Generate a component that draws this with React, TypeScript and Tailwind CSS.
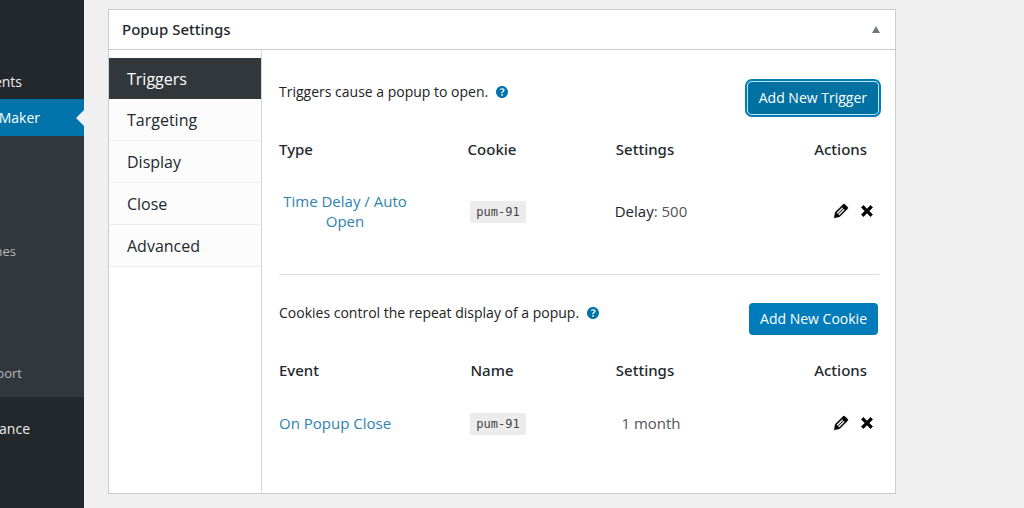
import type { ReactNode } from 'react';

const FONT = "font-['Open_Sans','Noto_Sans',sans-serif]";

function HelpIcon() {
  return (
    <svg viewBox="3 3 14 14" className="size-3 fill-[#0073aa]" aria-hidden="true">
      <path d="M17 10c0-3.87-3.14-7-7-7-3.87 0-7 3.13-7 7s3.13 7 7 7c3.86 0 7-3.13 7-7zm-6.3 1.48H9.14v-.43c0-.38.08-.7.24-.98s.46-.57.88-.89c.41-.29.68-.53.81-.71.14-.18.2-.39.2-.62 0-.25-.09-.44-.28-.58-.19-.13-.45-.19-.79-.19-.58 0-1.25.19-2 .57l-.64-1.28c.87-.49 1.8-.74 2.77-.74.81 0 1.45.2 1.92.58.48.39.71.91.71 1.55 0 .43-.09.8-.29 1.11-.19.32-.57.67-1.11 1.06-.38.28-.61.49-.71.63-.1.15-.15.34-.15.57v.35zm-1.47 2.74c-.18-.17-.27-.42-.27-.73 0-.33.08-.58.26-.75s.43-.25.77-.25c.32 0 .57.09.75.26s.27.42.27.74c0 .3-.09.55-.27.72-.18.18-.43.27-.75.27-.33 0-.58-.09-.76-.26z" />
    </svg>
  );
}

function EditIcon() {
  return (
    <svg viewBox="0 0 20 20" className="size-5" fill="#000" stroke="#000" strokeWidth="0.3" aria-hidden="true">
      <path d="M13.89 3.39l2.71 2.72c.46.46.42 1.24.03 1.64l-8.01 8.02-5.56 1.16 1.16-5.58s7.6-7.63 7.99-8.03c.39-.39 1.22-.39 1.68.07zm-2.73 2.79l-5.59 5.61 1.11 1.11 5.54-5.65zm-2.97 8.23l5.58-5.6-1.07-1.08-5.59 5.6z" />
    </svg>
  );
}

function RemoveIcon() {
  return (
    <svg viewBox="0 0 20 20" className="size-5" fill="#000" stroke="#000" strokeWidth="0.5" aria-hidden="true">
      <path d="M12.12 10l3.53 3.53-2.12 2.12L10 12.12l-3.54 3.54-2.12-2.12L7.88 10 4.34 6.46l2.12-2.12L10 7.88l3.54-3.53 2.12 2.12z" />
    </svg>
  );
}

function SectionHead({ text, button, focused }: { text: string; button: string; focused?: boolean }) {
  return (
    <div className="flex items-start justify-between pr-px">
      <p className="flex items-center gap-2 text-sm leading-5 text-[#222]">
        {text}
        <button type="button" aria-label="Help">
          <HelpIcon />
        </button>
      </p>
      <button
        type="button"
        className={
          focused
            ? 'h-8 rounded-sm bg-[#0071a1] px-[11px] text-sm text-white outline-2 outline-[#007cba] ring-1 ring-[#bfe3f5] outline-offset-1'
            : 'h-8 rounded-sm bg-[#007cba] px-[11px] text-sm text-white'
        }
      >
        {button}
      </button>
    </div>
  );
}

function SettingsTable({
  heads,
  label,
  value,
  children,
  tall,
}: {
  heads: string[];
  label: string;
  value: string;
  children: ReactNode;
  tall?: boolean;
}) {
  return (
    <table className="mt-5 w-full table-fixed text-[15px]">
      <colgroup>
        <col className="w-[22%]" />
        <col className="w-[29%]" />
        <col className="w-[22%]" />
        <col className="w-[27%]" />
      </colgroup>
      <thead>
        <tr className="h-[30px] font-['Noto_Sans',sans-serif] text-[#23282d]">
          <th className="p-0 text-left font-medium">{heads[0]}</th>
          <th className="p-0 pr-3 text-center font-medium">{heads[1]}</th>
          <th className="p-0 pr-3 text-center font-medium">{heads[2]}</th>
          <th className="p-0 pr-3 text-right font-medium">{heads[3]}</th>
        </tr>
      </thead>
      <tbody>
        <tr className={tall ? 'h-[94px] text-[#555]' : 'h-[76px] text-[#555]'}>
          <td className={tall ? 'p-0 text-center leading-5' : 'p-0 text-left leading-5'}>
            <a href="#edit" className="text-[#2e82ae]">
              {label}
            </a>
          </td>
          <td className="p-0 text-center">
            <code className="inline-block bg-[#ececec] px-1.5 font-['DejaVu_Sans_Mono',monospace] text-[12px] leading-[22px] text-[#444]">
              {value}
            </code>
          </td>
          <td className="p-0 text-center">{children}</td>
          <td className="p-0 pr-0.5">
            <div className="flex justify-end gap-1.5">
              <button type="button" aria-label="Edit">
                <EditIcon />
              </button>
              <button type="button" aria-label="Remove">
                <RemoveIcon />
              </button>
            </div>
          </td>
        </tr>
      </tbody>
    </table>
  );
}

const TABS = ['Targeting', 'Display', 'Close', 'Advanced'];

export default function App() {
  return (
    <div className={`flex min-h-screen bg-[#f0f0f0] ${FONT}`}>
      <nav className="flex w-21 shrink-0 flex-col overflow-hidden bg-[#23282d] text-sm text-[#eee]">
        <a href="#comments" className="mt-16 flex h-[35px] w-[22px] items-center justify-end">
          ents
        </a>
        <div className="flex h-[37px] items-center justify-between bg-[#0073aa] text-white">
          <a href="#popup-maker" className="flex w-10 justify-end">
            Maker
          </a>
          <svg viewBox="0 0 8 16" className="h-4 w-2 fill-[#f0f0f0]" aria-hidden="true">
            <path d="M8 0v16L0 8z" />
          </svg>
        </div>
        <div className="h-[261px] bg-[#32373c] pt-[105px] text-[13px] text-[#b4b9be]">
          <a href="#themes" className="flex h-5 w-4 items-center justify-end">
            nes
          </a>
          <a href="#support" className="mt-[102px] flex h-5 w-[22px] items-center justify-end">
            port
          </a>
        </div>
        <a href="#appearance" className="mt-3 flex h-10 w-[30px] items-center justify-end">
          ance
        </a>
      </nav>
      <main className="min-w-0 flex-1 pt-[9px] pr-32 pb-3 pl-6">
        <section className="border border-[#c9cccf] bg-white">
          <header className="flex h-10 items-center justify-between border-b border-[#c9cccf] pr-[15px] pl-[13px]">
            <h2 className="font-['Noto_Sans',sans-serif] text-[15px] font-medium text-[#23282d]">Popup Settings</h2>
            <button type="button" aria-label="Toggle panel">
              <svg viewBox="0 0 8 7" className="h-[7px] w-2 fill-[#72777c]" aria-hidden="true">
                <path d="M4 0l4 7H0z" />
              </svg>
            </button>
          </header>
          <div className="flex">
            <div className="w-[153px] shrink-0 border-r border-[#d5d8da] pt-2 text-base text-[#23282d]">
              <button type="button" className="block h-[41px] w-full bg-[#32373c] pl-[18px] text-left text-white">
                Triggers
              </button>
              {TABS.map((tab) => (
                <button
                  key={tab}
                  type="button"
                  className="block h-[42px] w-full border-b border-[#eee] bg-[#fcfcfc] pl-[18px] text-left"
                >
                  {tab}
                </button>
              ))}
            </div>
            <div className="min-w-0 flex-1 pt-8 pr-4 pb-8 pl-[17px]">
              <SectionHead text="Triggers cause a popup to open." button="Add New Trigger" focused />
              <SettingsTable
                heads={['Type', 'Cookie', 'Settings', 'Actions']}
                label="Time Delay / Auto Open"
                value="pum-91"
                tall
              >
                <span className="text-[#222]">Delay</span>: 500
              </SettingsTable>
              <hr className="mt-4 mb-7 border-[#ddd]" />
              <SectionHead text="Cookies control the repeat display of a popup." button="Add New Cookie" />
              <SettingsTable heads={['Event', 'Name', 'Settings', 'Actions']} label="On Popup Close" value="pum-91">
                1 month
              </SettingsTable>
            </div>
          </div>
        </section>
      </main>
    </div>
  );
}
